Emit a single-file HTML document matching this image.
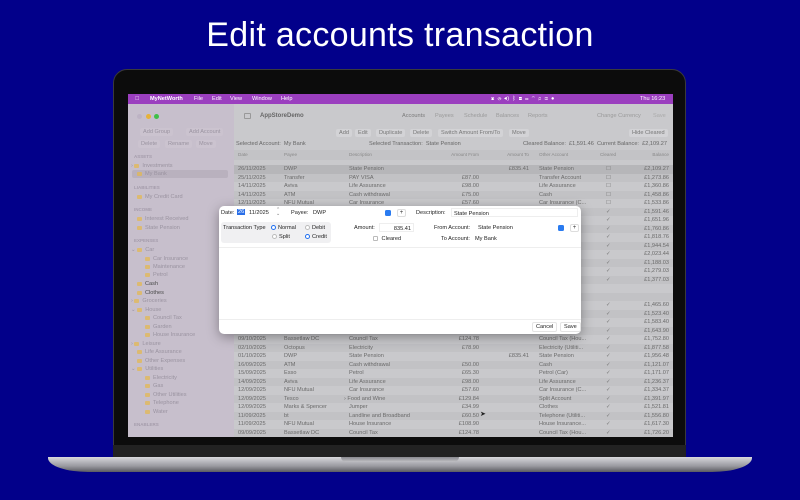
<!DOCTYPE html>
<html><head><meta charset="utf-8"><style>
*{margin:0;padding:0;box-sizing:border-box}
body{width:800px;height:500px;background:#02008a;position:relative;overflow:hidden;font-family:"Liberation Sans",sans-serif}
.a{position:absolute;white-space:nowrap}
h1{position:absolute;top:16px;left:0;width:800px;text-align:center;color:#fff;font-weight:400;font-size:34px;font-family:"Liberation Sans",sans-serif;letter-spacing:.3px}
.lid{position:absolute;left:113px;top:69px;width:573px;height:378px;background:#0c0c0c;border-radius:14px 14px 0 0;border:1px solid #3a3a3a}
.chin{position:absolute;left:113px;top:445px;width:573px;height:13px;background:#222}
.base{position:absolute;left:48px;top:457px;width:704px;height:15px;background:linear-gradient(#d8d8dc,#9a9aa0 60%,#5a5a60);border-radius:0 0 40px 40px/0 0 14px 14px}
.notch{position:absolute;left:341px;top:457px;width:118px;height:5px;background:linear-gradient(#8a8a90,#c0c0c4);border-radius:0 0 5px 5px}
.scr{position:absolute;left:128px;top:94px;width:545px;height:343px;background:#c8c8cb;overflow:hidden;font-size:5.6px;color:#707070}
.menu{position:absolute;left:0;top:0;width:545px;height:10px;background:#9b3fbf;color:#fff;font-size:5.6px;font-weight:bold}
.menu span{position:absolute;top:2px}
.side{position:absolute;left:0;top:10px;width:106px;height:333px;background:#c7bfcc}
.main{position:absolute;left:106px;top:10px;width:439px;height:333px;background:#c9c9cc}
.btn{position:absolute;background:#d3d3d6;border-radius:2px;padding:1px 3px;color:#8a8a8a}
.sb{color:#9a93a0}
.hd{color:#a59cab;font-size:4.5px;font-weight:bold}
.f{display:inline-block;width:5px;height:4px;background:#e6b84a;border-radius:1px;margin-right:3px;vertical-align:-0.5px;opacity:.7}
.rows{position:absolute;left:106px;top:71px;width:439px}
.r{height:8.5px;position:relative;color:#6a6a6a}
.r:nth-child(even){background:#c2c2c5}
.r i{position:absolute;font-style:normal;top:1.3px}
.d{left:4px}.p{left:50px}.s{left:115px}.fr{right:194px}.to{right:144px}.o{left:305px}.c{left:372px;color:#777}.b{right:4px}
.dlg{position:absolute;left:219px;top:206px;width:362px;height:128px;background:#fff;border-radius:5px;box-shadow:0 3px 12px rgba(0,0,0,.35);font-size:5.6px;color:#222}
.rad{display:inline-block;width:5px;height:5px;border-radius:50%;border:1px solid #bbb;vertical-align:-1px;margin-right:2px;background:#fff}
.on{border:1.5px solid #1f6ff0}
.blue{position:absolute;width:6px;height:6px;background:#2a7bf0;border-radius:1.5px}
.plus{position:absolute;width:9px;height:8px;border:1px solid #ddd;border-radius:2px;text-align:center;line-height:6px;font-size:6px;color:#333}
</style></head><body>
<h1>Edit accounts transaction</h1>
<div class="lid"></div>
<div class="chin"></div>
<div class="base"></div>
<div class="notch"></div>
<div class="scr">
 <div class="menu">
  <span style="left:7px">&#63743;</span><span style="left:22px">MyNetWorth</span><span style="left:66px;font-weight:normal">File</span><span style="left:84px;font-weight:normal">Edit</span><span style="left:102px;font-weight:normal">View</span><span style="left:124px;font-weight:normal">Window</span><span style="left:153px;font-weight:normal">Help</span>
  <span style="left:363px;font-weight:normal">▣ &nbsp;◷ &nbsp;◀) &nbsp;ᛒ &nbsp;▤ &nbsp;▭ &nbsp;◠ &nbsp;⌕ &nbsp;◫ &nbsp;●</span><span style="left:512px;font-weight:normal">Thu 16:23</span>
 </div>
 <div class="side">
  <div class="a" style="left:9px;top:10px;width:5px;height:5px;border-radius:50%;background:#bdb3c4"></div>
  <div class="a" style="left:18px;top:10px;width:5px;height:5px;border-radius:50%;background:#e6b23a"></div>
  <div class="a" style="left:26px;top:10px;width:5px;height:5px;border-radius:50%;background:#3fbf48"></div>
  <div class="btn sb" style="left:12px;top:24px;background:#cbc3cf">Add Group</div>
  <div class="btn sb" style="left:58px;top:24px;background:#cbc3cf">Add Account</div>
  <div class="btn sb" style="left:10px;top:36px;background:#cbc3cf">Delete</div>
  <div class="btn sb" style="left:37px;top:36px;background:#cbc3cf">Rename</div>
  <div class="btn sb" style="left:68px;top:36px;background:#cbc3cf">Move</div>
  <div class="a hd" style="left:6px;top:50px">ASSETS</div>
  <div class="a sb" style="left:3px;top:59px">› <span class="f"></span>Investments</div>
  <div class="a" style="left:4px;top:66px;width:96px;height:8px;background:#b9b1be;border-radius:2px"></div>
  <div class="a sb" style="left:9px;top:67px"><span class="f"></span>My Bank</div>
  <div class="a hd" style="left:6px;top:81px">LIABILITIES</div>
  <div class="a sb" style="left:9px;top:90px"><span class="f"></span>My Credit Card</div>
  <div class="a hd" style="left:6px;top:103px">INCOME</div>
  <div class="a sb" style="left:9px;top:112px"><span class="f"></span>Interest Received</div>
  <div class="a sb" style="left:9px;top:121px"><span class="f"></span>State Pension</div>
  <div class="a hd" style="left:6px;top:134px">EXPENSES</div>
  <div class="a sb" style="left:3px;top:143px">⌄ <span class="f"></span>Car</div>
  <div class="a sb" style="left:17px;top:152px"><span class="f"></span>Car Insurance</div>
  <div class="a sb" style="left:17px;top:160px"><span class="f"></span>Maintenance</div>
  <div class="a sb" style="left:17px;top:168px"><span class="f"></span>Petrol</div>
  <div class="a" style="left:9px;top:177px;color:#4a4a4a"><span class="f"></span>Cash</div>
  <div class="a" style="left:9px;top:186px;color:#4a4a4a"><span class="f"></span>Clothes</div>
  <div class="a sb" style="left:3px;top:194px">› <span class="f"></span>Groceries</div>
  <div class="a sb" style="left:3px;top:203px">⌄ <span class="f"></span>House</div>
  <div class="a sb" style="left:17px;top:211px"><span class="f"></span>Council Tax</div>
  <div class="a sb" style="left:17px;top:220px"><span class="f"></span>Garden</div>
  <div class="a sb" style="left:17px;top:228px"><span class="f"></span>House Insurance</div>
  <div class="a sb" style="left:3px;top:237px">› <span class="f"></span>Leisure</div>
  <div class="a sb" style="left:9px;top:245px"><span class="f"></span>Life Assurance</div>
  <div class="a sb" style="left:9px;top:254px"><span class="f"></span>Other Expenses</div>
  <div class="a sb" style="left:3px;top:262px">⌄ <span class="f"></span>Utilities</div>
  <div class="a sb" style="left:17px;top:271px"><span class="f"></span>Electricity</div>
  <div class="a sb" style="left:17px;top:279px"><span class="f"></span>Gas</div>
  <div class="a sb" style="left:17px;top:288px"><span class="f"></span>Other Utilities</div>
  <div class="a sb" style="left:17px;top:296px"><span class="f"></span>Telephone</div>
  <div class="a sb" style="left:17px;top:305px"><span class="f"></span>Water</div>
  <div class="a hd" style="left:6px;top:318px">ENABLERS</div>
 </div>
 <div class="main">
  <div class="a" style="left:10px;top:9px;width:7px;height:6px;border:1px solid #999;border-radius:1px"></div>
  <div class="a" style="left:26px;top:9px;font-weight:bold;color:#666;font-size:6px">AppStoreDemo</div>
  <div class="a" style="left:168px;top:9px;color:#7a7a7a">Accounts</div>
  <div class="a" style="left:201px;top:9px;color:#9a9a9a">Payees</div>
  <div class="a" style="left:230px;top:9px;color:#9a9a9a">Schedule</div>
  <div class="a" style="left:262px;top:9px;color:#9a9a9a">Balances</div>
  <div class="a" style="left:294px;top:9px;color:#9a9a9a">Reports</div>
  <div class="a" style="left:363px;top:9px;color:#9a9a9a">Change Currency</div>
  <div class="a" style="left:419px;top:9px;color:#aaa">Save</div>
  <div class="btn" style="left:102px;top:25px;color:#777">Add</div>
  <div class="btn" style="left:121px;top:25px;color:#777">Edit</div>
  <div class="btn" style="left:142px;top:25px;color:#777">Duplicate</div>
  <div class="btn" style="left:176px;top:25px;color:#777">Delete</div>
  <div class="btn" style="left:204px;top:25px;color:#777">Switch Amount From/To</div>
  <div class="btn" style="left:275px;top:25px;color:#777">Move</div>
  <div class="btn" style="left:395px;top:25px;color:#777">Hide Cleared</div>
  <div class="a" style="left:2px;top:37px;color:#666">Selected Account:&nbsp; My Bank</div>
  <div class="a" style="left:135px;top:37px;color:#666">Selected Transaction:&nbsp; State Pension</div>
  <div class="a" style="left:289px;top:37px;color:#666">Cleared Balance:&nbsp; £1,591.46 &nbsp;Current Balance:&nbsp; £2,109.27</div>
  <div class="a" style="left:0;top:46px;width:439px;height:10px;background:#c3c3c6"></div>
  <div class="a" style="left:4px;top:48px;font-size:4.6px;color:#888">Date</div>
  <div class="a" style="left:50px;top:48px;font-size:4.6px;color:#888">Payee</div>
  <div class="a" style="left:115px;top:48px;font-size:4.6px;color:#888">Description</div>
  <div class="a" style="right:194px;top:48px;font-size:4.6px;color:#888">Amount From</div>
  <div class="a" style="right:144px;top:48px;font-size:4.6px;color:#888">Amount To</div>
  <div class="a" style="left:305px;top:48px;font-size:4.6px;color:#888">Other Account</div>
  <div class="a" style="left:366px;top:48px;font-size:4.6px;color:#888">Cleared</div>
  <div class="a" style="right:4px;top:48px;font-size:4.6px;color:#888">Balance</div>
 </div>
 <div class="rows">
  <div class="r" style="background:#b6b6b9"><i class="d">26/11/2025</i><i class="p">DWP</i><i class="s">State Pension</i><i class="to">£835.41</i><i class="o">State Pension</i><i class="c">☐</i><i class="b">£2,109.27</i></div>
  <div class="r"><i class="d">25/11/2025</i><i class="p">Transfer</i><i class="s">PAY VISA</i><i class="fr">£87.00</i><i class="o">Transfer Account</i><i class="c">☐</i><i class="b">£1,273.86</i></div>
  <div class="r"><i class="d">14/11/2025</i><i class="p">Aviva</i><i class="s">Life Assurance</i><i class="fr">£98.00</i><i class="o">Life Assurance</i><i class="c">☐</i><i class="b">£1,360.86</i></div>
  <div class="r"><i class="d">14/11/2025</i><i class="p">ATM</i><i class="s">Cash withdrawal</i><i class="fr">£75.00</i><i class="o">Cash</i><i class="c">☐</i><i class="b">£1,458.86</i></div>
  <div class="r"><i class="d">12/11/2025</i><i class="p">NFU Mutual</i><i class="s">Car Insurance</i><i class="fr">£57.60</i><i class="o">Car Insurance (C...</i><i class="c">☐</i><i class="b">£1,533.86</i></div>
  <div class="r"><i class="c">✓</i><i class="b">£1,591.46</i></div>
  <div class="r"><i class="c">✓</i><i class="b">£1,651.96</i></div>
  <div class="r"><i class="c">✓</i><i class="b">£1,760.86</i></div>
  <div class="r"><i class="c">✓</i><i class="b">£1,818.76</i></div>
  <div class="r"><i class="c">✓</i><i class="b">£1,944.54</i></div>
  <div class="r"><i class="c">✓</i><i class="b">£2,023.44</i></div>
  <div class="r"><i class="c">✓</i><i class="b">£1,188.03</i></div>
  <div class="r"><i class="c">✓</i><i class="b">£1,279.03</i></div>
  <div class="r"><i class="c">✓</i><i class="b">£1,377.03</i></div>
  <div class="r"></div>
  <div class="r"></div>
  <div class="r"><i class="c">✓</i><i class="b">£1,465.60</i></div>
  <div class="r"><i class="c">✓</i><i class="b">£1,523.40</i></div>
  <div class="r"><i class="c">✓</i><i class="b">£1,583.40</i></div>
  <div class="r"><i class="c">✓</i><i class="b">£1,643.90</i></div>
  <div class="r"><i class="d">09/10/2025</i><i class="p">Bassetlaw DC</i><i class="s">Council Tax</i><i class="fr">£124.78</i><i class="o">Council Tax (Hou...</i><i class="c">✓</i><i class="b">£1,752.80</i></div>
  <div class="r"><i class="d">02/10/2025</i><i class="p">Octopus</i><i class="s">Electricity</i><i class="fr">£78.90</i><i class="o">Electricity (Utiliti...</i><i class="c">✓</i><i class="b">£1,877.58</i></div>
  <div class="r"><i class="d">01/10/2025</i><i class="p">DWP</i><i class="s">State Pension</i><i class="to">£835.41</i><i class="o">State Pension</i><i class="c">✓</i><i class="b">£1,956.48</i></div>
  <div class="r"><i class="d">16/09/2025</i><i class="p">ATM</i><i class="s">Cash withdrawal</i><i class="fr">£50.00</i><i class="o">Cash</i><i class="c">✓</i><i class="b">£1,121.07</i></div>
  <div class="r"><i class="d">15/09/2025</i><i class="p">Esso</i><i class="s">Petrol</i><i class="fr">£65.30</i><i class="o">Petrol (Car)</i><i class="c">✓</i><i class="b">£1,171.07</i></div>
  <div class="r"><i class="d">14/09/2025</i><i class="p">Aviva</i><i class="s">Life Assurance</i><i class="fr">£98.00</i><i class="o">Life Assurance</i><i class="c">✓</i><i class="b">£1,236.37</i></div>
  <div class="r"><i class="d">12/09/2025</i><i class="p">NFU Mutual</i><i class="s">Car Insurance</i><i class="fr">£57.60</i><i class="o">Car Insurance (C...</i><i class="c">✓</i><i class="b">£1,334.37</i></div>
  <div class="r"><i class="d">12/09/2025</i><i class="p">Tesco</i><i class="s" style="left:110px">› Food and Wine</i><i class="fr">£129.84</i><i class="o">Split Account</i><i class="c">✓</i><i class="b">£1,391.97</i></div>
  <div class="r"><i class="d">12/09/2025</i><i class="p">Marks &amp; Spencer</i><i class="s">Jumper</i><i class="fr">£34.99</i><i class="o">Clothes</i><i class="c">✓</i><i class="b">£1,521.81</i></div>
  <div class="r"><i class="d">11/09/2025</i><i class="p">bt</i><i class="s">Landline and Broadband</i><i class="fr">£60.50</i><i class="o">Telephone (Utiliti...</i><i class="c">✓</i><i class="b">£1,556.80</i></div>
  <div class="r"><i class="d">11/09/2025</i><i class="p">NFU Mutual</i><i class="s">House Insurance</i><i class="fr">£108.90</i><i class="o">House Insurance...</i><i class="c">✓</i><i class="b">£1,617.30</i></div>
  <div class="r"><i class="d">09/09/2025</i><i class="p">Bassetlaw DC</i><i class="s">Council Tax</i><i class="fr">£124.78</i><i class="o">Council Tax (Hou...</i><i class="c">✓</i><i class="b">£1,726.20</i></div>
 </div>
 <div class="a" style="left:352px;top:316px;font-size:7px;color:#222">➤</div>
</div>
<div class="dlg">
 <div class="a" style="left:2px;top:4px">Date:</div>
 <div class="a" style="left:18px;top:3px;background:#2a6fe8;color:#fff;padding:0 1px">26</div>
 <div class="a" style="left:30px;top:4px">11/2025</div>
 <div class="a" style="left:57px;top:2px;font-size:5px;color:#777;line-height:4px">⌃<br>⌄</div>
 <div class="a" style="left:72px;top:4px">Payee:</div>
 <div class="a" style="left:94px;top:4px">DWP</div>
 <div class="blue" style="left:166px;top:4px"></div>
 <div class="plus" style="left:178px;top:3px">+</div>
 <div class="a" style="left:197px;top:4px">Description:</div>
 <div class="a" style="left:232px;top:2px;width:127px;height:9px;border:1px solid #eee;padding:1.5px 2px">State Pension</div>
 <div class="a" style="left:2px;top:16px;width:110px;height:21px;background:#f0f0f2;border-radius:3px"></div>
 <div class="a" style="left:4px;top:19px">Transaction Type</div>
 <div class="a" style="left:52px;top:19px"><span class="rad on"></span>Normal</div>
 <div class="a" style="left:86px;top:19px"><span class="rad"></span>Debit</div>
 <div class="a" style="left:53px;top:28px"><span class="rad"></span>Split</div>
 <div class="a" style="left:86px;top:28px"><span class="rad on"></span>Credit</div>
 <div class="a" style="left:135px;top:19px">Amount:</div>
 <div class="a" style="left:160px;top:17px;width:35px;height:9px;border:1px solid #eee;text-align:right;padding:1.5px 2px">835.41</div>
 <div class="a" style="left:154px;top:30px"><span class="rad" style="border-radius:1px"></span>&nbsp;Cleared</div>
 <div class="a" style="left:215px;top:19px">From Account:</div>
 <div class="a" style="left:259px;top:19px">State Pension</div>
 <div class="blue" style="left:339px;top:19px"></div>
 <div class="plus" style="left:351px;top:18px">+</div>
 <div class="a" style="left:222px;top:30px">To Account:</div>
 <div class="a" style="left:256px;top:30px">My Bank</div>
 <div class="a" style="left:0;top:41px;width:362px;height:1px;background:#eee"></div>
 <div class="a" style="left:0;top:113px;width:362px;height:1px;background:#eee"></div>
 <div class="a" style="left:313px;top:116px;border:1px solid #e4e4e4;border-radius:2px;padding:1px 3px">Cancel</div>
 <div class="a" style="left:341px;top:116px;border:1px solid #e4e4e4;border-radius:2px;padding:1px 3px">Save</div>
</div>
</body></html>
